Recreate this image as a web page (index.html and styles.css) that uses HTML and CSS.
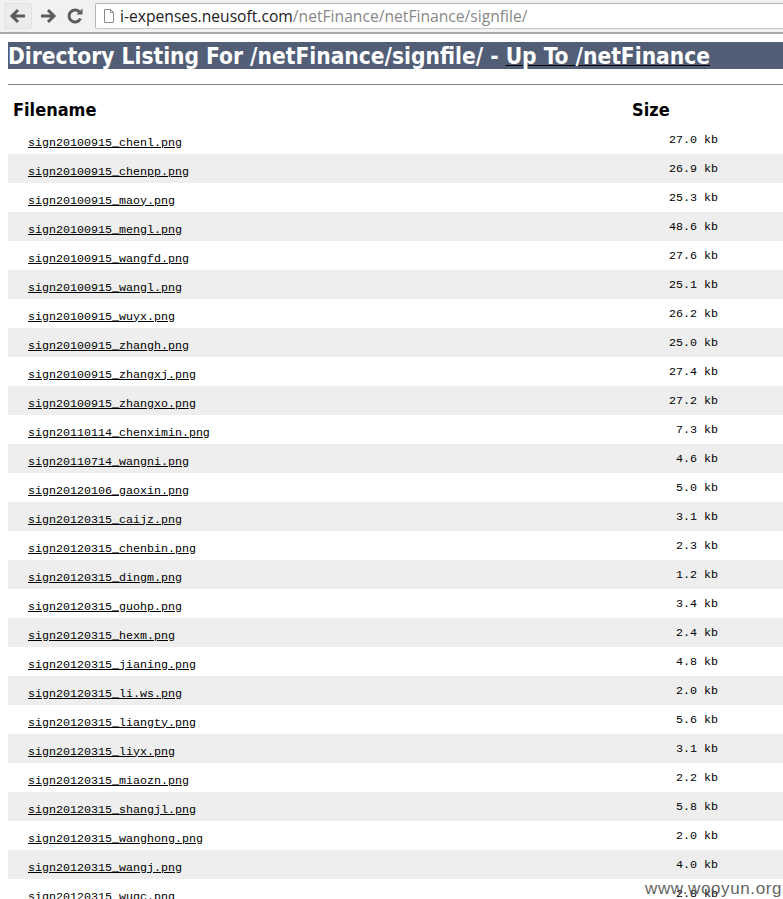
FILE: index.html
```html
<!DOCTYPE html>
<html lang="en">
<head>
    <meta charset="UTF-8">
    <title>Directory Listing For /netFinance/signfile/</title>
    <link rel="stylesheet" href="styles.css">
</head>
<body>
    <div class="toolbar">
        <div class="nav-btn back">
            <svg width="20" height="20" viewBox="0 0 20 20"><path d="M17 10H5M10 4l-6 6 6 6" fill="none" stroke="#5c5c5c" stroke-width="3"/></svg>
        </div>
        <div class="nav-btn">
            <svg width="20" height="20" viewBox="0 0 20 20"><path d="M3 10h12M10 4l6 6-6 6" fill="none" stroke="#5c5c5c" stroke-width="3"/></svg>
        </div>
        <div class="nav-btn reload">
            <svg width="20" height="20" viewBox="0 0 20 20"><path d="M15.5 12.5A6 6 0 1 1 14.5 6" fill="none" stroke="#5c5c5c" stroke-width="3"/><path d="M11.5 8.5H17.5V2.5z" fill="#5c5c5c"/></svg>
        </div>
        <div class="omnibox">
            <svg width="12" height="14" viewBox="0 0 12 14"><path d="M1.5.5h6l3 3v10h-9z M7.5.5v3h3" fill="#fff" stroke="#8d8d8d"/></svg>
            <span class="url-host">i-expenses.neusoft.com</span><span class="url-path">/netFinance/netFinance/signfile/</span>
        </div>
    </div>

    <div class="page">
        <h1>Directory Listing For /netFinance/signfile/ - <a href="#">Up To /netFinance</a></h1>
        <hr>
        <table class="listing">
            <thead>
                <tr><th class="name-col">Filename</th><th class="size-col">Size</th><th></th></tr>
            </thead>
            <tbody>
                <tr><td class="name"><a href="#">sign20100915_chenl.png</a></td><td class="size">27.0 kb</td><td></td></tr>
                <tr><td class="name"><a href="#">sign20100915_chenpp.png</a></td><td class="size">26.9 kb</td><td></td></tr>
                <tr><td class="name"><a href="#">sign20100915_maoy.png</a></td><td class="size">25.3 kb</td><td></td></tr>
                <tr><td class="name"><a href="#">sign20100915_mengl.png</a></td><td class="size">48.6 kb</td><td></td></tr>
                <tr><td class="name"><a href="#">sign20100915_wangfd.png</a></td><td class="size">27.6 kb</td><td></td></tr>
                <tr><td class="name"><a href="#">sign20100915_wangl.png</a></td><td class="size">25.1 kb</td><td></td></tr>
                <tr><td class="name"><a href="#">sign20100915_wuyx.png</a></td><td class="size">26.2 kb</td><td></td></tr>
                <tr><td class="name"><a href="#">sign20100915_zhangh.png</a></td><td class="size">25.0 kb</td><td></td></tr>
                <tr><td class="name"><a href="#">sign20100915_zhangxj.png</a></td><td class="size">27.4 kb</td><td></td></tr>
                <tr><td class="name"><a href="#">sign20100915_zhangxo.png</a></td><td class="size">27.2 kb</td><td></td></tr>
                <tr><td class="name"><a href="#">sign20110114_chenximin.png</a></td><td class="size">7.3 kb</td><td></td></tr>
                <tr><td class="name"><a href="#">sign20110714_wangni.png</a></td><td class="size">4.6 kb</td><td></td></tr>
                <tr><td class="name"><a href="#">sign20120106_gaoxin.png</a></td><td class="size">5.0 kb</td><td></td></tr>
                <tr><td class="name"><a href="#">sign20120315_caijz.png</a></td><td class="size">3.1 kb</td><td></td></tr>
                <tr><td class="name"><a href="#">sign20120315_chenbin.png</a></td><td class="size">2.3 kb</td><td></td></tr>
                <tr><td class="name"><a href="#">sign20120315_dingm.png</a></td><td class="size">1.2 kb</td><td></td></tr>
                <tr><td class="name"><a href="#">sign20120315_guohp.png</a></td><td class="size">3.4 kb</td><td></td></tr>
                <tr><td class="name"><a href="#">sign20120315_hexm.png</a></td><td class="size">2.4 kb</td><td></td></tr>
                <tr><td class="name"><a href="#">sign20120315_jianing.png</a></td><td class="size">4.8 kb</td><td></td></tr>
                <tr><td class="name"><a href="#">sign20120315_li.ws.png</a></td><td class="size">2.0 kb</td><td></td></tr>
                <tr><td class="name"><a href="#">sign20120315_liangty.png</a></td><td class="size">5.6 kb</td><td></td></tr>
                <tr><td class="name"><a href="#">sign20120315_liyx.png</a></td><td class="size">3.1 kb</td><td></td></tr>
                <tr><td class="name"><a href="#">sign20120315_miaozn.png</a></td><td class="size">2.2 kb</td><td></td></tr>
                <tr><td class="name"><a href="#">sign20120315_shangjl.png</a></td><td class="size">5.8 kb</td><td></td></tr>
                <tr><td class="name"><a href="#">sign20120315_wanghong.png</a></td><td class="size">2.0 kb</td><td></td></tr>
                <tr><td class="name"><a href="#">sign20120315_wangj.png</a></td><td class="size">4.0 kb</td><td></td></tr>
                <tr><td class="name"><a href="#">sign20120315_wugc.png</a></td><td class="size">2.8 kb</td><td></td></tr>
            </tbody>
        </table>
    </div>

    <div class="watermark">www.wooyun.org</div>
</body>
</html>
```

FILE: styles.css
```css
html, body {
    margin: 0;
    height: 899px;
    overflow: hidden;
    background-color: #fff;
}
body {
    position: relative;
    font-family: "DejaVu Sans", sans-serif;
}

/* browser chrome */
.toolbar {
    display: flex;
    align-items: center;
    height: 32px;
    padding-left: 5px;
    background-color: #f1f1f1;
    border-bottom: 2px solid #a8a8a8;
}
.nav-btn {
    display: flex;
    align-items: center;
    justify-content: center;
    width: 26px;
    height: 24px;
    margin-right: 3px;
    border-radius: 2px;
}
.nav-btn.back {
    border: 1px solid #e2e2e2;
    margin-left: -1px;
    background-color: #ececec;
}
.nav-btn.reload {
    margin-left: -2px;
}
.omnibox {
    display: flex;
    align-items: center;
    flex-grow: 1;
    height: 24px;
    margin-left: 4px;
    padding-left: 7px;
    background-color: #fff;
    border: 1px solid #b5b5b5;
    border-right: none;
    border-bottom-color: #c8c8c8;
    border-radius: 2px 0 0 2px;
    font-family: "Open Sans", sans-serif;
    font-size: 15.65px;
}
.omnibox svg {
    margin-right: 5px;
}
.url-host { color: #222; }
.url-path { color: #888; }

/* listing */
.page {
    padding: 8px 0 0 8px;
}
h1 {
    margin: 0;
    height: 27px;
    line-height: 28px;
    font-family: "DejaVu Sans", sans-serif;
    font-stretch: condensed;
    font-size: 22.56px;
    font-weight: bold;
    white-space: nowrap;
    color: #fff;
    background-color: #525d76;
}
h1 a {
    color: #fff;
    text-decoration: underline;
    text-decoration-color: #000;
    text-decoration-thickness: 1px;
}
hr {
    height: 1px;
    margin: 15px 0 0;
    border: none;
    background-color: #808080;
}
.listing {
    width: 775px;
    table-layout: fixed;
    border-collapse: collapse;
}
.listing th {
    height: 32px;
    padding: 8px 0 0;
    font-family: "DejaVu Sans", sans-serif;
    font-stretch: condensed;
    font-size: 18px;
    text-align: left;
}
.listing th.name-col {
    width: 624px;
    padding-left: 5px;
    box-sizing: border-box;
}
.listing th.size-col {
    width: 86px;
}
.listing td {
    height: 29px;
    padding: 0;
    font-family: "Liberation Mono", monospace;
    font-size: 11.67px;
    color: #000;
}
.listing tbody tr:nth-child(even) {
    background-color: #eee;
}
.listing td.name {
    padding: 6px 0 0 20px;
    box-sizing: border-box;
}
.listing td.name a {
    color: #000;
}
.listing td.size {
    padding-top: 1px;
    text-align: right;
    box-sizing: border-box;
}

.watermark {
    position: absolute;
    right: 1px;
    bottom: 0;
    font-family: "Liberation Sans", sans-serif;
    font-size: 17px;
    letter-spacing: 0.6px;
    color: #555;
    opacity: 0.9;
}
```
